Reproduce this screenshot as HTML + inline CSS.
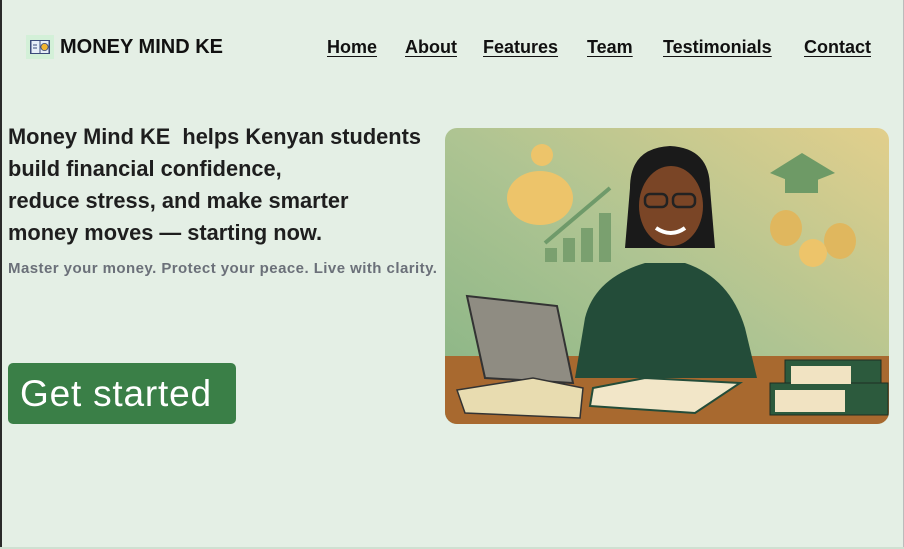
<!DOCTYPE html>
<html><head><meta charset="utf-8"><style>
*{margin:0;padding:0;box-sizing:border-box}
html,body{width:904px;height:549px;overflow:hidden}
body{background:#e4efe5;font-family:"Liberation Sans",sans-serif;position:relative}
.bl{position:absolute;left:0;top:0;width:2px;height:549px;background:#2a2a2a}
.br{position:absolute;right:0;top:0;width:1px;height:549px;background:#bbb}
.bb{position:absolute;left:0;bottom:0;width:904px;height:2px;background:#cfe0d1}
.logo{position:absolute;left:26px;top:35px;display:flex;align-items:center;font-weight:bold;font-size:20px;color:#111}
.logo .ic{width:28px;height:24px;background:#d3f0d8;margin-right:6px;display:flex;align-items:center;justify-content:center}
.nav a{position:absolute;top:37px;font-size:18px;font-weight:bold;color:#111;text-decoration:underline;text-underline-offset:3px;white-space:nowrap}
h1{position:absolute;left:8px;top:121px;font-size:21.8px;line-height:32px;color:#1e1e1e;font-weight:bold}
.sub{position:absolute;left:8px;top:260px;font-size:15px;color:#6b7079;font-weight:bold;letter-spacing:0.45px}
.btn{position:absolute;left:8px;top:363px;width:228px;height:61px;background:#3a7f47;border-radius:5px;color:#fff;font-size:37px;line-height:61px;padding-left:12px;letter-spacing:0.8px}
.img{position:absolute;left:445px;top:128px;width:444px;height:296px;border-radius:12px;overflow:hidden}
</style></head><body>
<div class="bl"></div><div class="br"></div><div class="bb"></div>
<div class="logo"><div class="ic"><svg width="22" height="18" viewBox="0 0 22 18"><rect x="1" y="2" width="20" height="14" fill="#3b4a7a"/><rect x="2.5" y="3" width="8" height="12" fill="#e6eef8"/><rect x="11.5" y="3" width="8" height="12" fill="#e6eef8"/><line x1="4" y1="7" x2="8" y2="7" stroke="#3b4a7a"/><line x1="4" y1="10" x2="8" y2="10" stroke="#3b4a7a"/><circle cx="15.5" cy="9" r="3.6" fill="#f2b530" stroke="#3b4a7a" stroke-width=".8"/></svg></div>MONEY MIND KE</div>
<div class="nav">
<a style="left:327px">Home</a><a style="left:405px">About</a><a style="left:483px">Features</a><a style="left:587px">Team</a><a style="left:663px">Testimonials</a><a style="left:804px">Contact</a>
</div>
<h1>Money Mind KE&nbsp; helps Kenyan students<br>build financial confidence,<br>reduce stress, and make smarter<br>money moves — starting now.</h1>
<div class="sub">Master your money. Protect your peace. Live with clarity.</div>
<div class="btn">Get started</div>
<div class="img"><svg width="444" height="296" viewBox="0 0 444 296">
<defs><linearGradient id="bg" x1="0" y1="1" x2="1" y2="0"><stop offset="0" stop-color="#86b485"/><stop offset=".5" stop-color="#aec492"/><stop offset="1" stop-color="#e2cf8c"/></linearGradient></defs>
<rect width="444" height="296" fill="url(#bg)"/>
<ellipse cx="95" cy="70" rx="33" ry="27" fill="#edc46a"/><circle cx="97" cy="27" r="11" fill="#edc46a"/>
<path d="M100 115 L165 60" stroke="#6f9a6a" stroke-width="4" fill="none"/>
<rect x="100" y="120" width="12" height="14" fill="#7aa06f"/><rect x="118" y="110" width="12" height="24" fill="#7aa06f"/><rect x="136" y="100" width="12" height="34" fill="#7aa06f"/><rect x="154" y="85" width="12" height="49" fill="#7aa06f"/>
<path d="M325 45 L357 25 L390 45 L357 58 Z" fill="#6e9a66"/><rect x="340" y="45" width="33" height="20" fill="#6e9a66"/>
<ellipse cx="341" cy="100" rx="16" ry="18" fill="#e0b75e"/><ellipse cx="395" cy="113" rx="16" ry="18" fill="#e0b75e"/><circle cx="368" cy="125" r="14" fill="#edc46a"/>
<rect x="0" y="228" width="444" height="68" fill="#a8692f"/>
<path d="M140 190 Q150 150 200 135 L240 135 Q285 150 300 200 L312 250 L130 250 Z" fill="#234c39"/>
<path d="M185 60 Q185 20 225 18 Q265 20 265 60 L270 120 L180 120 Z" fill="#1a1a1a"/>
<ellipse cx="226" cy="78" rx="32" ry="40" fill="#7a4526"/>
<path d="M211 100 Q226 110 240 100" stroke="#fff" stroke-width="4" fill="none"/>
<rect x="200" y="66" width="22" height="13" rx="5" fill="none" stroke="#222" stroke-width="2.5"/><rect x="228" y="66" width="22" height="13" rx="5" fill="none" stroke="#222" stroke-width="2.5"/>
<path d="M22 168 L112 178 L128 255 L40 250 Z" fill="#8f8c82" stroke="#333" stroke-width="2"/>
<path d="M12 262 L88 250 L138 260 L135 290 L20 285 Z" fill="#e8dcb0" stroke="#333" stroke-width="1.5"/>
<path d="M148 260 L200 250 L295 255 L250 285 L145 278 Z" fill="#f2e6c8" stroke="#234c39" stroke-width="2"/>
<rect x="340" y="232" width="96" height="28" fill="#2c5a3d" stroke="#1e2e22"/><rect x="325" y="255" width="118" height="32" fill="#2c5a3d" stroke="#1e2e22"/>
<rect x="330" y="262" width="70" height="22" fill="#f1e3c2"/><rect x="346" y="238" width="60" height="18" fill="#f1e3c2"/>
</svg></div>
</body></html>
